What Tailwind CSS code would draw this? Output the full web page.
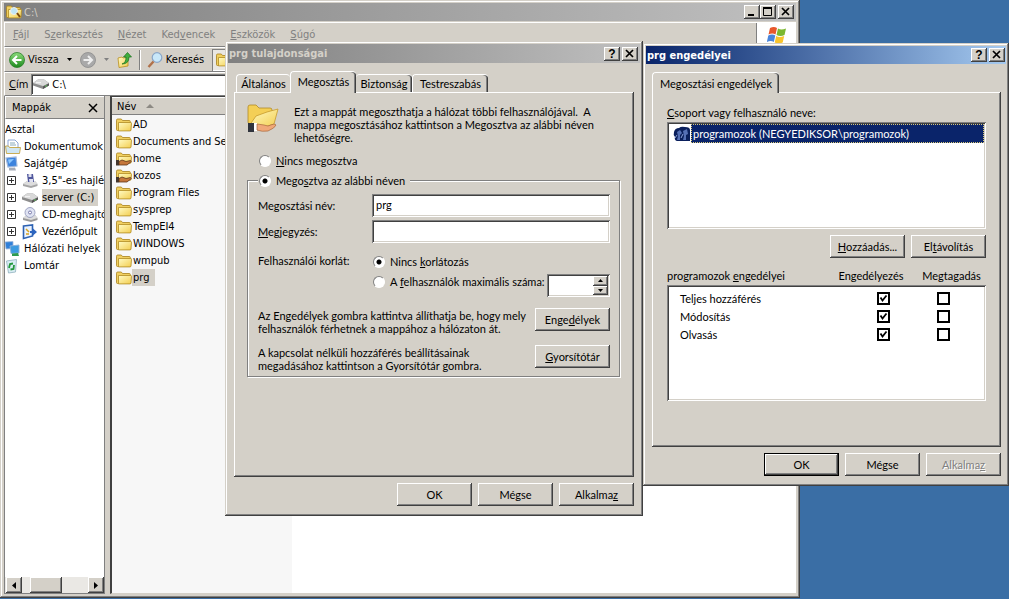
<!DOCTYPE html>
<html lang="hu">
<head>
<meta charset="utf-8">
<title>C:\</title>
<script src="https://cdn.jsdelivr.net/npm/@tailwindcss/browser@4"></script>
</head>
<body class="relative h-screen overflow-hidden bg-[#3a6ea5] text-[11px] leading-[13px] text-black font-['Lato','Liberation_Sans',sans-serif]">

<svg class="absolute size-0" aria-hidden="true">
  <defs>
    <linearGradient id="gold" x1="0" y1="0" x2="1" y2="1"><stop offset="0" stop-color="#fffbc4"/><stop offset="1" stop-color="#f3cd4f"/></linearGradient>
    <linearGradient id="green" x1="0" y1="0" x2="0" y2="1"><stop offset="0" stop-color="#8ddb7c"/><stop offset="1" stop-color="#1c8a1c"/></linearGradient>
  </defs>
  <symbol id="folder" viewBox="0 0 16 16">
    <path d="M.5 3.2Q.5 2 1.7 2h3.6l1.2 1.5h6.800q1 0 1 1V13.500H1.500q-1 0-1-1z" fill="#f0cf60" stroke="#a8821a" stroke-width=".8"/>
    <path d="M2.500 5.500h12.300q.7 0 .7.8l-.5 6.700q-.1.900-1 .900H2.500z" fill="url(#gold)" stroke="#b18b22" stroke-width=".8"/>
  </symbol>
  <symbol id="shared" viewBox="0 0 16 16">
    <path d="M.5 3.200Q.5 2 1.700 2h3.600l1.200 1.500h6.800q1 0 1 1V12H1.500q-1 0-1-1z" fill="#f0cf60" stroke="#a8821a" stroke-width=".8"/>
    <path d="M2.500 5.500h12.300q.7 0 .7.8l-.5 5.700H2.500z" fill="url(#gold)" stroke="#b18b22" stroke-width=".8"/>
    <path d="M0 9h3v5.500H0z" fill="#43372f"/><path d="M3 10.500l3-1.500 4 1.500 4.500-1 .8 1-4.300 3.500H3z" fill="#c5763a" stroke="#5e3518" stroke-width=".8"/>
  </symbol>
  <symbol id="drive" viewBox="0 0 16 16">
    <path d="M0 7l5-3.500h6L16 7v2.500L10 13 0 9.500z" fill="#8d8d8d"/><path d="M0 7l5-3.500h6L16 7l-6 3z" fill="#d9d9d9"/><path d="M10 10.500l6-3v2L10 13z" fill="#555"/><path d="M3 6.700h5" stroke="#f8f8f8"/><path d="M12 10h2" stroke="#6c6"/>
  </symbol>
</svg>

<!-- Explorer window -->
<main class="absolute left-0 top-0 right-[209px] bottom-px flex flex-col bg-[#d4d0c8] pt-[3px] px-1 pb-1 shadow-[inset_-1px_-1px_#404040,inset_1px_1px_#d4d0c8,inset_-2px_-2px_#808080,inset_2px_2px_#fff] font-['DejaVu_Sans_Condensed','DejaVu_Sans',sans-serif]">
  <header class="flex h-[18px] shrink-0 items-center gap-0.5 bg-linear-to-r from-[#808080] to-[#c0c0c0] pl-0.5 text-[#d4d0c8]">
    <svg class="size-4" viewBox="0 0 16 16"><use href="#folder"/><circle cx="8" cy="7" r="3.500" fill="#bfe6f5" stroke="#eee"/><path d="M11 9l3 4" stroke="#7a4a10" stroke-width="2"/></svg>
    <h1 class="grow">C:\</h1>
    <button aria-label="Kis méret" class="grid h-3.5 w-4 place-items-center bg-[#d4d0c8] text-black shadow-[inset_-1px_-1px_#404040,inset_1px_1px_#fff,inset_-2px_-2px_#808080]"><svg width="16" height="14"><path d="M4 10h6" stroke="#000" stroke-width="2"/></svg></button>
    <button aria-label="Teljes méret" class="-ml-0.5 grid h-3.5 w-4 place-items-center bg-[#d4d0c8] shadow-[inset_-1px_-1px_#404040,inset_1px_1px_#fff,inset_-2px_-2px_#808080]"><svg width="16" height="14"><path d="M3.500 3v7.500h8V3M3 3h9" stroke="#000" fill="none"/><path d="M3 3h9" stroke="#000" stroke-width="2"/></svg></button>
    <button aria-label="Bezárás" class="mr-0.5 grid h-3.5 w-4 place-items-center bg-[#d4d0c8] shadow-[inset_-1px_-1px_#404040,inset_1px_1px_#fff,inset_-2px_-2px_#808080]"><svg width="16" height="14"><path d="M4 3l7 7M11 3l-7 7" stroke="#000" stroke-width="1.700"/></svg></button>
  </header>

  <nav class="mt-px flex h-[25px] shrink-0 border-t border-l border-white border-b border-b-[#808080] text-[#808080]">
    <ul class="flex grow items-center gap-[15px] pl-2">
      <li><u>F</u>ájl</li><li>S<u>z</u>erkesztés</li><li><u>N</u>ézet</li><li>Ked<u>v</u>encek</li><li><u>E</u>szközök</li><li><u>S</u>úgó</li>
    </ul>
    <div class="flex w-10 justify-center border-l border-[#808080] bg-white pt-0.5">
      <svg class="size-5" viewBox="0 0 20 20"><path d="M3 3q4-2 7 0L8.500 9.500q-3-2-7 0z" fill="#e8582c"/><path d="M11 3.500q3 2 8 0L17.500 10q-4 2-8 0z" fill="#7cb82f"/><path d="M1.300 10.500q4-2 7 0L6.800 17q-3-2-7 0z" fill="#4a86dc"/><path d="M9.200 11q3 2 8 0l-1.500 6.500q-4 2-8 0z" fill="#f8c42c"/></svg>
    </div>
  </nav>

  <div class="flex h-[25px] shrink-0 items-center border-t border-l border-white border-b border-b-[#808080] pl-1">
    <button class="flex items-center gap-[3px]">
      <svg class="size-4" viewBox="0 0 16 16"><circle cx="8" cy="8" r="7.500" fill="url(#green)" stroke="#2a7d2a" stroke-width=".8"/><path d="M12.500 8H4.500M8 4L4 8l4 4" fill="none" stroke="#fff" stroke-width="2"/></svg>
      Vissza
    </button>
    <svg class="ml-2 h-[3px] w-[5px]" viewBox="0 0 5 3"><path d="M0 0h5L2.500 3z"/></svg>
    <svg class="ml-2 size-4" viewBox="0 0 16 16"><circle cx="8" cy="8" r="7.500" fill="#a9a9a9" stroke="#8c8c8c" stroke-width=".8"/><path d="M3.500 8h8M8 4l4 4-4 4" fill="none" stroke="#eee" stroke-width="2"/></svg>
    <svg class="ml-2 h-[3px] w-[5px]" viewBox="0 0 5 3"><path d="M0 0h5L2.500 3z" fill="#808080"/></svg>
    <svg class="ml-2 size-4" viewBox="0 0 16 16"><path d="M1 6l4-1 1 1 5-1v9l-9 1.500z" fill="url(#gold)" stroke="#b98f1f" stroke-width=".8"/><path d="M5 12q4-1 4-7H6.500L10.500.500l4 4.500H12q0 7-7 7z" fill="#3fae3f" stroke="#17701a" stroke-width=".7"/></svg>
    <span class="mx-1.5 h-5 w-0.5 border-l border-[#808080] border-r border-r-white"></span>
    <button class="flex items-center gap-[3px]">
      <svg class="size-4" viewBox="0 0 16 16"><circle cx="10" cy="5.500" r="4.800" fill="#c8e8fa" stroke="#8aa6c8" stroke-width="1.200"/><path d="M6.500 9.500L1.500 15" stroke="#b0714a" stroke-width="2.400"/></svg>
      Keresés
    </button>
    <button aria-label="Mappák" class="ml-2 flex h-[22px] w-[70px] items-center bg-[#e9e7e3] pl-1 shadow-[inset_1px_1px_#808080,inset_-1px_-1px_#fff]"><svg class="size-4"><use href="#folder"/></svg></button>
  </div>

  <div class="flex h-6 shrink-0 items-center gap-[3px] border-t border-l border-white border-b border-b-[#808080] pl-1">
    <label for="address"><u>C</u>ím</label>
    <div class="flex h-[21px] grow items-center gap-[3px] bg-white px-0.5 shadow-[inset_1px_1px_#808080,inset_-1px_-1px_#fff,inset_2px_2px_#404040]">
      <svg class="size-4"><use href="#drive"/></svg>
      <input id="address" value="C:\" class="min-w-0 grow outline-none">
    </div>
  </div>

  <div class="flex min-h-0 grow">
    <aside class="flex w-[101px] shrink-0 flex-col border-x border-b border-[#808080] bg-white">
      <div class="flex h-[23px] shrink-0 items-center justify-between border-t border-l border-white border-b border-b-[#808080] bg-[#d4d0c8] pl-1.5 pr-1.5">
        <h2>Mappák</h2>
        <button aria-label="Bezárás"><svg width="10" height="10"><path d="M1 1l8 8M9 1L1 9" stroke="#000" stroke-width="1.500"/></svg></button>
      </div>
      <ul class="grow overflow-hidden whitespace-nowrap pt-0.5">
        <li class="flex h-[17px] items-center">Asztal</li>
        <li class="flex h-[17px] items-center gap-[3px]"><svg class="size-4 shrink-0" viewBox="0 0 16 16"><path d="M3 1h7l3 3v8H3z" fill="#fff" stroke="#6f8fc9" stroke-width=".8"/><path d="M5 4h5M5 6h6" stroke="#8ab"/><path d="M.5 7h3l1 1.500h11l-1 6H1.500z" fill="#cfe6f3" stroke="#c29a2a" stroke-width=".8"/></svg>Dokumentumok</li>
        <li class="flex h-[17px] items-center gap-[3px]"><svg class="size-4 shrink-0" viewBox="0 0 16 16"><path d="M1 2l10-1 1 9-9 1z" fill="#3c83dd" stroke="#9db7dc" stroke-width="1.200"/><path d="M3 3.500l6-.5-5 5z" fill="#8cc8ff"/><path d="M4 12l6-.5 1 3H4z" fill="#a6acb8"/></svg>Sajátgép</li>
        <li class="flex h-[17px] items-center pl-0.5"><svg class="mr-1.5 size-[9px] shrink-0" viewBox="0 0 9 9"><path d="M.5.500h8v8h-8zM2 4.500h5M4.500 2v5" fill="#fff" stroke="#333"/></svg><svg class="mr-1 size-4 shrink-0" viewBox="0 0 16 16"><path d="M1 11l4-3h8l2.500 3v2L9 15l-8-2z" fill="#a5a5a5"/><path d="M1 11l4-3h8l2.500 3L9 13z" fill="#ddd"/><path d="M5 1h6l1 8H6z" fill="#50579d"/><path d="M6.500 1h3v3h-3zM7 6h4v3H7.500z" fill="#dfe1ef"/></svg>3,5"-es hajlé</li>
        <li class="flex h-[17px] items-center pl-0.5"><svg class="mr-1.5 size-[9px] shrink-0" viewBox="0 0 9 9"><path d="M.5.500h8v8h-8zM2 4.500h5M4.500 2v5" fill="#fff" stroke="#333"/></svg><svg class="mr-1 size-4 shrink-0"><use href="#drive"/></svg><span class="bg-[#d4d0c8] py-0.5 pr-1">server (C:)</span></li>
        <li class="flex h-[17px] items-center pl-0.5"><svg class="mr-1.5 size-[9px] shrink-0" viewBox="0 0 9 9"><path d="M.5.500h8v8h-8zM2 4.500h5M4.500 2v5" fill="#fff" stroke="#333"/></svg><svg class="mr-1 size-4 shrink-0" viewBox="0 0 16 16"><path d="M1 11l4-3h8l2.500 3v2L9 15l-8-2z" fill="#999"/><path d="M1 11l4-3h8l2.500 3L9 13z" fill="#ddd"/><circle cx="8" cy="5.500" r="5" fill="#dfe3f2" stroke="#8d92b5" stroke-width=".8"/><circle cx="8" cy="5.500" r="1.500" fill="#fff" stroke="#77a"/></svg>CD-meghajtó</li>
        <li class="flex h-[17px] items-center pl-0.5"><svg class="mr-1.5 size-[9px] shrink-0" viewBox="0 0 9 9"><path d="M.5.500h8v8h-8zM2 4.500h5M4.500 2v5" fill="#fff" stroke="#333"/></svg><svg class="mr-1 size-4 shrink-0" viewBox="0 0 16 16"><path d="M1.500 2l9-1v11l-9 2.500z" fill="#eaf3ff" stroke="#2d62b3" stroke-width="1.600"/><path d="M4 5l3 3M4 10h3" stroke="#d7a321" stroke-width="1.500"/><path d="M8 7h3V4.500L15 8l-4 3.500V9H8z" fill="#2c65c0"/></svg>Vezérlőpult</li>
        <li class="flex h-[17px] items-center gap-[3px]"><svg class="size-4 shrink-0" viewBox="0 0 16 16"><path d="M0 1l8-.500v7L1 8z" fill="#2f7fd8" stroke="#9db7dc" stroke-width=".8"/><path d="M5 5l9-1v8l-8 .5z" fill="#3c9be0" stroke="#8fb1d8" stroke-width=".9"/><path d="M7 12.500l6-.5 1 3H7z" fill="#2e9a50"/></svg>Hálózati helyek</li>
        <li class="flex h-[17px] items-center gap-[3px]"><svg class="size-4 shrink-0" viewBox="0 0 16 16"><path d="M1.500 3l10-1.500L10.500 14l-7 1z" fill="#d9edf4" stroke="#9ab8c4" stroke-width=".9"/><path d="M4 10l1-4 3-.500M9 7l-.5 4-3 .5" fill="none" stroke="#23983b" stroke-width="1.800"/></svg>Lomtár</li>
      </ul>
      <div class="flex h-4 shrink-0 bg-[#eae8e4]">
        <button aria-label="Balra" class="ml-px grid w-4 place-items-center bg-[#d4d0c8] shadow-[inset_-1px_-1px_#404040,inset_1px_1px_#fff,inset_-2px_-2px_#808080]"><svg width="4" height="7"><path d="M4 0v7L0 3.500z"/></svg></button>
        <span class="ml-2 w-8 bg-[#d4d0c8] shadow-[inset_-1px_-1px_#404040,inset_1px_1px_#fff,inset_-2px_-2px_#808080]"></span>
        <button aria-label="Jobbra" class="ml-auto grid w-4 place-items-center bg-[#d4d0c8] shadow-[inset_-1px_-1px_#404040,inset_1px_1px_#fff,inset_-2px_-2px_#808080]"><svg width="4" height="7"><path d="M0 0v7l4-3.500z"/></svg></button>
      </div>
    </aside>
    <section class="ml-[5px] flex min-w-0 grow flex-col border-l-2 border-t border-[#404040] border-b border-b-[#d4d0c8] bg-white">
      <div class="flex h-[18px] shrink-0 border-b border-[#808080] bg-[#d4d0c8]">
        <button class="flex w-[180px] items-center gap-2.5 border-t border-white pl-[5px]">Név <svg width="8" height="4"><path d="M0 4h8L4 0z" fill="#8d8a84"/></svg></button>
      </div>
      <ul class="w-[180px] grow bg-[#f7f7f7] pl-1 pt-px whitespace-nowrap">
        <li class="flex h-[17px] items-center"><svg class="size-4 shrink-0"><use href="#folder"/></svg><span class="px-px">AD</span></li>
        <li class="flex h-[17px] items-center"><svg class="size-4 shrink-0"><use href="#folder"/></svg><span class="px-px">Documents and Settings</span></li>
        <li class="flex h-[17px] items-center"><svg class="size-4 shrink-0"><use href="#shared"/></svg><span class="px-px">home</span></li>
        <li class="flex h-[17px] items-center"><svg class="size-4 shrink-0"><use href="#shared"/></svg><span class="px-px">kozos</span></li>
        <li class="flex h-[17px] items-center"><svg class="size-4 shrink-0"><use href="#folder"/></svg><span class="px-px">Program Files</span></li>
        <li class="flex h-[17px] items-center"><svg class="size-4 shrink-0"><use href="#folder"/></svg><span class="px-px">sysprep</span></li>
        <li class="flex h-[17px] items-center"><svg class="size-4 shrink-0"><use href="#folder"/></svg><span class="px-px">TempEI4</span></li>
        <li class="flex h-[17px] items-center"><svg class="size-4 shrink-0"><use href="#folder"/></svg><span class="px-px">WINDOWS</span></li>
        <li class="flex h-[17px] items-center"><svg class="size-4 shrink-0"><use href="#folder"/></svg><span class="px-px">wmpub</span></li>
        <li class="flex h-[17px] items-center"><svg class="size-4 shrink-0"><use href="#folder"/></svg><span class="bg-[#d4d0c8] py-0.5 pl-px pr-1.5">prg</span></li>
      </ul>
    </section>
  </div>
</main>

<!-- Folder properties dialog -->
<section role="dialog" aria-labelledby="t1" class="absolute left-[225px] top-[41px] w-[418px] bg-[#d4d0c8] p-[3px] pb-2.5 shadow-[inset_-1px_-1px_#404040,inset_1px_1px_#d4d0c8,inset_-2px_-2px_#808080,inset_2px_2px_#fff]">
  <header class="flex h-[19px] items-center bg-linear-to-r from-[#808080] to-[#c0c0c0] pl-px pr-0.5 text-[#d4d0c8]">
    <h2 id="t1" class="grow font-bold font-['DejaVu_Sans_Condensed','DejaVu_Sans',sans-serif]">prg tulajdonságai</h2>
    <button aria-label="Súgó" class="mr-0.5 grid h-3.5 w-4 place-items-center bg-[#d4d0c8] text-[12px] leading-3 font-bold text-black font-['Liberation_Sans',sans-serif] shadow-[inset_-1px_-1px_#404040,inset_1px_1px_#fff,inset_-2px_-2px_#808080]">?</button>
    <button aria-label="Bezárás" class="grid h-3.5 w-4 place-items-center bg-[#d4d0c8] shadow-[inset_-1px_-1px_#404040,inset_1px_1px_#fff,inset_-2px_-2px_#808080]"><svg width="16" height="14"><path d="M4 3l7 7M11 3l-7 7" stroke="#000" stroke-width="1.700"/></svg></button>
  </header>
  <div class="px-1.5 pt-2">
    <div role="tablist" class="flex items-end pl-0.5">
      <button role="tab" class="h-[18px] w-[54px] rounded-t-sm border-t border-l border-white">Általános</button>
      <button role="tab" aria-selected="true" class="z-10 -mb-px h-[22px] w-[66px] rounded-t-sm border-t border-l border-white bg-[#d4d0c8] pb-0.5 shadow-[inset_-1px_0_#404040,inset_-2px_0_#808080]">Megosztás</button>
      <button role="tab" class="h-[18px] w-[56px] rounded-t-sm border-t border-white shadow-[inset_-1px_0_#404040,inset_-2px_0_#808080]">Biztonság</button>
      <button role="tab" class="h-[18px] w-[76px] rounded-t-sm border-t border-l border-white shadow-[inset_-1px_0_#404040,inset_-2px_0_#808080]">Testreszabás</button>
    </div>
    <div role="tabpanel" class="min-h-[385px] pl-[13px] pr-[14px] pt-3 shadow-[inset_-1px_-1px_#404040,inset_1px_1px_#fff,inset_-2px_-2px_#808080]">
      <div class="flex gap-[15px]">
        <svg class="size-8 shrink-0" viewBox="0 0 32 32"><path d="M1 3q0-2 2-2h6l3 3h11q2 0 2 2v14H3q-2 0-2-2z" fill="#f4cf56" stroke="#b08a28" stroke-width=".8"/><path d="M2 22L9 12l11-4 11-3-4 15-12 4z" fill="url(#gold)" stroke="#c79a2c" stroke-width=".8"/><path d="M1 19h6v9H1z" fill="#30343d"/><path d="M7 19h3v8H7z" fill="#fff"/><path d="M10 20l7 1 4 1q7-3 8-1-1 3-8 6-6 1-11-1z" fill="#f0a878" stroke="#a8673c" stroke-width=".7"/></svg>
        <p class="pt-px whitespace-nowrap">Ezt a mappát megoszthatja a hálózat többi felhasználójával.&nbsp; A<br>mappa megosztásához kattintson a Megosztva az alábbi néven<br>lehetőségre.</p>
      </div>
      <label class="mt-2.5 ml-3 flex w-fit items-center gap-[5px]"><input type="radio" name="share" class="size-3 appearance-none rounded-full border border-[#808080] border-r-white border-b-white bg-white checked:bg-[radial-gradient(circle,#000_2px,#fff_3px)]"><span><u>N</u>incs megosztva</span></label>
      <fieldset class="mt-[7px] min-w-0 border border-[#808080] pl-2.5 pr-[9px] pb-1 shadow-[1px_1px_#fff,inset_1px_1px_#fff]">
        <legend class="bg-[#d4d0c8] pr-1"><label class="flex items-center gap-[5px] pl-px pr-px"><input type="radio" name="share" checked class="size-3 appearance-none rounded-full border border-[#808080] border-r-white border-b-white bg-white checked:bg-[radial-gradient(circle,#000_2px,#fff_3px)]"><span>Mego<u>s</u>ztva az alábbi néven</span></label></legend>
        <div class="mt-[7px] grid grid-cols-[114px_minmax(0,1fr)] items-center gap-y-[3px]">
          <label for="name">Me<u>g</u>osztási név:</label>
          <input id="name" value="prg" class="h-[23px] min-w-0 bg-white px-1 pb-0.5 outline-none shadow-[inset_1px_1px_#808080,inset_-1px_-1px_#fff,inset_2px_2px_#404040,inset_-2px_-2px_#d4d0c8]">
          <label for="note"><u>M</u>egjegyzés:</label>
          <input id="note" class="h-[23px] min-w-0 bg-white px-1 outline-none shadow-[inset_1px_1px_#808080,inset_-1px_-1px_#fff,inset_2px_2px_#404040,inset_-2px_-2px_#d4d0c8]">
        </div>
        <div class="mt-[11px] grid grid-cols-[114px_minmax(0,1fr)]">
          <span>Felhasználói korlát:</span>
          <label class="flex h-[15px] items-center gap-[5px] pl-px"><input type="radio" name="limit" checked class="size-3 appearance-none rounded-full border border-[#808080] border-r-white border-b-white bg-white checked:bg-[radial-gradient(circle,#000_2px,#fff_3px)]"><span>Nincs <u>k</u>orlátozás</span></label>
          <div class="col-start-2 mt-[5px] flex items-start">
            <label class="mt-px flex min-w-0 grow items-center gap-[5px] whitespace-nowrap pl-px"><input type="radio" name="limit" class="size-3 shrink-0 appearance-none rounded-full border border-[#808080] border-r-white border-b-white bg-white checked:bg-[radial-gradient(circle,#000_2px,#fff_3px)]"><span>A <u>f</u>elhasználók maximális száma:</span></label>
            <div class="flex h-[23px] w-[63px] shrink-0 bg-white p-0.5 shadow-[inset_1px_1px_#808080,inset_-1px_-1px_#fff,inset_2px_2px_#404040,inset_-2px_-2px_#d4d0c8]">
              <input aria-label="Felhasználók maximális száma" class="w-0 grow outline-none">
              <div class="flex w-[15px] flex-col">
                <button aria-label="Több" class="grid grow place-items-center bg-[#d4d0c8] shadow-[inset_-1px_-1px_#404040,inset_1px_1px_#fff,inset_-2px_-2px_#808080]"><svg width="5" height="3"><path d="M0 3h5L2.500 0z"/></svg></button>
                <button aria-label="Kevesebb" class="grid grow place-items-center bg-[#d4d0c8] shadow-[inset_-1px_-1px_#404040,inset_1px_1px_#fff,inset_-2px_-2px_#808080]"><svg width="5" height="3"><path d="M0 0h5L2.500 3z"/></svg></button>
              </div>
            </div>
          </div>
        </div>
        <div class="mt-[11px] flex items-start justify-between">
          <p class="pt-px whitespace-nowrap">Az Engedélyek gombra kattintva állíthatja be, hogy mely<br>felhasználók férhetnek a mappához a hálózaton át.</p>
          <button class="h-[23px] w-[75px] shrink-0 bg-[#d4d0c8] shadow-[inset_-1px_-1px_#404040,inset_1px_1px_#fff,inset_-2px_-2px_#808080]">Enge<u>d</u>élyek</button>
        </div>
        <div class="mt-2.5 flex items-start justify-between">
          <p class="pt-px whitespace-nowrap">A kapcsolat nélküli hozzáférés beállításainak<br>megadásához kattintson a Gyorsítótár gombra.</p>
          <button class="h-[23px] w-[75px] shrink-0 bg-[#d4d0c8] shadow-[inset_-1px_-1px_#404040,inset_1px_1px_#fff,inset_-2px_-2px_#808080]"><u>G</u>yorsítótár</button>
        </div>
      </fieldset>
    </div>
    <footer class="mt-1.5 flex justify-end gap-1.5">
      <button class="h-[23px] w-[75px] shadow-[inset_-1px_-1px_#404040,inset_1px_1px_#fff,inset_-2px_-2px_#808080]">OK</button>
      <button class="h-[23px] w-[75px] shadow-[inset_-1px_-1px_#404040,inset_1px_1px_#fff,inset_-2px_-2px_#808080]">Mégse</button>
      <button class="h-[23px] w-[75px] shadow-[inset_-1px_-1px_#404040,inset_1px_1px_#fff,inset_-2px_-2px_#808080]">Alkalma<u>z</u></button>
    </footer>
  </div>
</section>

<!-- Permissions dialog -->
<section role="dialog" aria-labelledby="t2" class="absolute left-[643px] top-[43px] w-[366px] bg-[#d4d0c8] p-[3px] pb-2.5 shadow-[inset_-1px_-1px_#404040,inset_1px_1px_#d4d0c8,inset_-2px_-2px_#808080,inset_2px_2px_#fff]">
  <header class="flex h-[18px] items-center bg-linear-to-r from-[#0a246a] to-[#a6caf0] pl-px pr-px text-white">
    <h2 id="t2" class="grow font-bold font-['DejaVu_Sans_Condensed','DejaVu_Sans',sans-serif]">prg engedélyei</h2>
    <button aria-label="Súgó" class="mr-0.5 grid h-3.5 w-4 place-items-center bg-[#d4d0c8] text-[12px] leading-3 font-bold text-black font-['Liberation_Sans',sans-serif] shadow-[inset_-1px_-1px_#404040,inset_1px_1px_#fff,inset_-2px_-2px_#808080]">?</button>
    <button aria-label="Bezárás" class="grid h-3.5 w-4 place-items-center bg-[#d4d0c8] shadow-[inset_-1px_-1px_#404040,inset_1px_1px_#fff,inset_-2px_-2px_#808080]"><svg width="16" height="14"><path d="M4 3l7 7M11 3l-7 7" stroke="#000" stroke-width="1.700"/></svg></button>
  </header>
  <div class="pt-2 pl-1.5 pr-[5px]">
    <div role="tablist" class="flex">
      <button role="tab" aria-selected="true" class="z-10 -mb-px h-[21px] w-[127px] rounded-t-sm border-t border-l border-white bg-[#d4d0c8] shadow-[inset_-1px_0_#404040,inset_-2px_0_#808080]">Megosztási engedélyek</button>
    </div>
    <div role="tabpanel" class="min-h-[355px] px-[15px] pt-[14px] shadow-[inset_-1px_-1px_#404040,inset_1px_1px_#fff,inset_-2px_-2px_#808080]">
      <h3 id="groups"><u>C</u>soport vagy felhasználó neve:</h3>
      <ul role="listbox" aria-labelledby="groups" class="mt-[3px] min-h-[107px] bg-white pt-0.5 px-0.5 shadow-[inset_1px_1px_#808080,inset_-1px_-1px_#fff,inset_2px_2px_#404040,inset_-2px_-2px_#d4d0c8]">
        <li role="option" aria-selected="true" class="flex h-[19px] items-center pl-1 text-white">
          <svg class="h-4 w-[18px] shrink-0" viewBox="0 0 18 16"><path d="M1 6q1-4 5-4 2-2 6-1 5 0 5 3v11H4q-3-1-2-4-2-2-1-5z" fill="#0a1f5c"/><path d="M4 6l3-2 2 3-2 2v5H4l1-4zM10 5l4-2 1 5-2 1v5h-3l1-4z" fill="#5570b5"/><path d="M2 12l2-3M8 12l2-4" stroke="#8aa0d8"/></svg>
          <span class="flex h-full grow items-center border border-dotted border-[#d8c878] bg-[#0a246a] pl-px">programozok (NEGYEDIKSOR\programozok)</span>
        </li>
      </ul>
      <div class="mt-1.5 flex justify-end gap-1.5">
        <button class="h-[23px] w-[75px] shadow-[inset_-1px_-1px_#404040,inset_1px_1px_#fff,inset_-2px_-2px_#808080]"><u>H</u>ozzáadás...</button>
        <button class="h-[23px] w-[75px] shadow-[inset_-1px_-1px_#404040,inset_1px_1px_#fff,inset_-2px_-2px_#808080]">El<u>t</u>ávolítás</button>
      </div>
      <table class="mt-[11px] block">
        <thead class="block">
          <tr class="grid grid-cols-[1fr_92px_69px]">
            <th class="text-left font-normal">programozok <u>e</u>ngedélyei</th><th class="text-center font-normal">Engedélyezés</th><th class="text-center font-normal">Megtagadás</th>
          </tr>
        </thead>
        <tbody class="mt-[3px] block min-h-[116px] bg-white pt-1 shadow-[inset_1px_1px_#808080,inset_-1px_-1px_#fff,inset_2px_2px_#404040,inset_-2px_-2px_#d4d0c8]">
          <tr class="grid h-[18px] grid-cols-[1fr_60px_49px] items-center pl-[13px]">
            <th class="text-left font-normal">Teljes hozzáférés</th>
            <td><label class="grid w-[13px]"><input type="checkbox" checked aria-label="Teljes hozzáférés engedélyezése" class="peer size-[13px] appearance-none border-2 border-black bg-white [grid-area:1/1]"><svg class="hidden size-[13px] [grid-area:1/1] peer-checked:block" viewBox="0 0 13 13"><path d="M3.500 5.500l2 3 4-5" fill="none" stroke="#000" stroke-width="1.800"/></svg></label></td>
            <td><input type="checkbox" aria-label="Teljes hozzáférés megtagadása" class="block size-[13px] appearance-none border-2 border-black bg-white"></td>
          </tr>
          <tr class="grid h-[18px] grid-cols-[1fr_60px_49px] items-center pl-[13px]">
            <th class="text-left font-normal">Módosítás</th>
            <td><label class="grid w-[13px]"><input type="checkbox" checked aria-label="Módosítás engedélyezése" class="peer size-[13px] appearance-none border-2 border-black bg-white [grid-area:1/1]"><svg class="hidden size-[13px] [grid-area:1/1] peer-checked:block" viewBox="0 0 13 13"><path d="M3.500 5.500l2 3 4-5" fill="none" stroke="#000" stroke-width="1.800"/></svg></label></td>
            <td><input type="checkbox" aria-label="Módosítás megtagadása" class="block size-[13px] appearance-none border-2 border-black bg-white"></td>
          </tr>
          <tr class="grid h-[18px] grid-cols-[1fr_60px_49px] items-center pl-[13px]">
            <th class="text-left font-normal">Olvasás</th>
            <td><label class="grid w-[13px]"><input type="checkbox" checked aria-label="Olvasás engedélyezése" class="peer size-[13px] appearance-none border-2 border-black bg-white [grid-area:1/1]"><svg class="hidden size-[13px] [grid-area:1/1] peer-checked:block" viewBox="0 0 13 13"><path d="M3.500 5.500l2 3 4-5" fill="none" stroke="#000" stroke-width="1.800"/></svg></label></td>
            <td><input type="checkbox" aria-label="Olvasás megtagadása" class="block size-[13px] appearance-none border-2 border-black bg-white"></td>
          </tr>
        </tbody>
      </table>
    </div>
    <footer class="mt-1.5 flex justify-end gap-1.5">
      <button class="h-[23px] w-[75px] border border-black shadow-[inset_-1px_-1px_#404040,inset_1px_1px_#fff,inset_-2px_-2px_#808080]">OK</button>
      <button class="h-[23px] w-[75px] shadow-[inset_-1px_-1px_#404040,inset_1px_1px_#fff,inset_-2px_-2px_#808080]">Mégse</button>
      <button disabled class="h-[23px] w-[75px] text-[#808080] text-shadow-[1px_1px_#fff] shadow-[inset_-1px_-1px_#404040,inset_1px_1px_#fff,inset_-2px_-2px_#808080]">Alkalma<u>z</u></button>
    </footer>
  </div>
</section>
</body>
</html>
